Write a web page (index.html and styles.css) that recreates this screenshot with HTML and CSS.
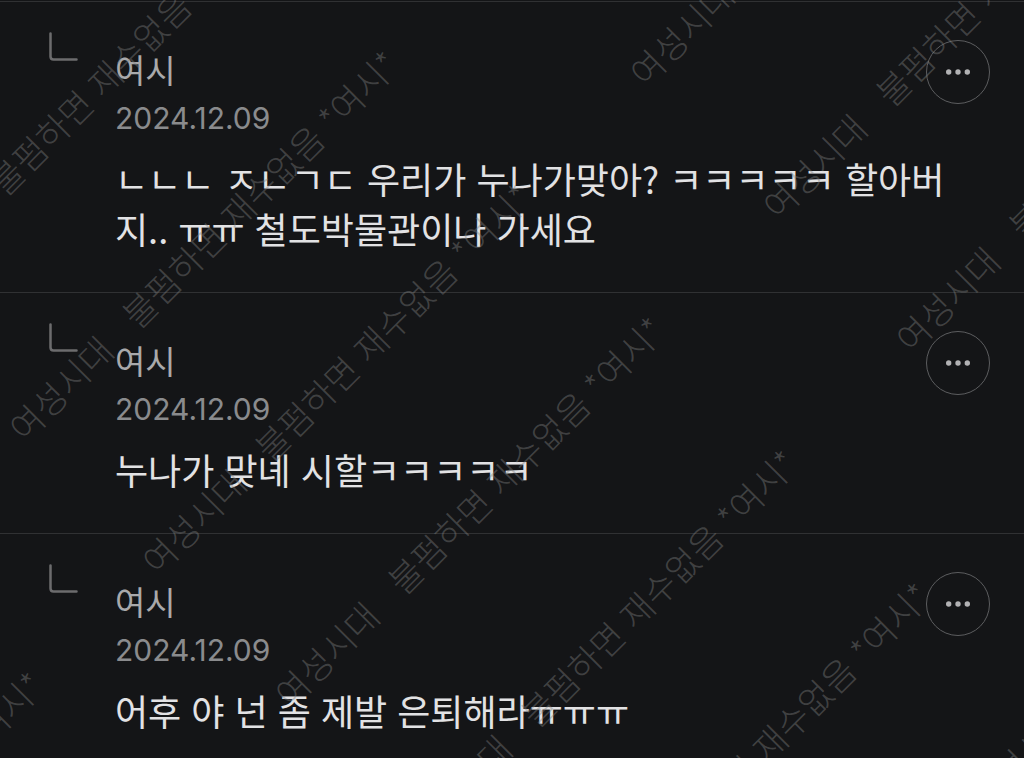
FILE: index.html
```html
<!DOCTYPE html>
<html lang="ko">
<head>
  <meta charset="UTF-8" />
  <meta name="viewport" content="width=device-width, initial-scale=1.0" />
  <title>댓글</title>
  <link rel="stylesheet" href="styles.css">
</head>
<body>
<main class="comments">
  <ul class="list">
    <li class="item">
      <svg class="reply" viewBox="0 0 30 30" aria-hidden="true"><path d="M2.5 1.5V24.500Q2.500 27.500 5.500 27.500H28.500" /></svg>
      <div class="content">
        <div class="name">여시</div>
        <div class="date">2024.12.09</div>
        <p class="text">ㄴㄴㄴ ㅈㄴㄱㄷ 우리가 누나가맞아? ㅋㅋㅋㅋㅋ 할아버지.. ㅠㅠ 철도박물관이나 가세요</p>
      </div>
      <button class="more" type="button" aria-label="더보기">
        <svg viewBox="0 0 26 6" aria-hidden="true"><circle cx="3.700" cy="3" r="2.700" /><circle cx="13" cy="3" r="2.700" /><circle cx="22.300" cy="3" r="2.700" /></svg>
      </button>
    </li>
    <li class="item">
      <svg class="reply" viewBox="0 0 30 30" aria-hidden="true"><path d="M2.5 1.5V24.500Q2.500 27.500 5.500 27.500H28.500" /></svg>
      <div class="content">
        <div class="name">여시</div>
        <div class="date">2024.12.09</div>
        <p class="text">누나가 맞녜 시할ㅋㅋㅋㅋㅋ</p>
      </div>
      <button class="more" type="button" aria-label="더보기">
        <svg viewBox="0 0 26 6" aria-hidden="true"><circle cx="3.700" cy="3" r="2.700" /><circle cx="13" cy="3" r="2.700" /><circle cx="22.300" cy="3" r="2.700" /></svg>
      </button>
    </li>
    <li class="item">
      <svg class="reply" viewBox="0 0 30 30" aria-hidden="true"><path d="M2.5 1.5V24.500Q2.500 27.500 5.500 27.500H28.500" /></svg>
      <div class="content">
        <div class="name">여시</div>
        <div class="date">2024.12.09</div>
        <p class="text">어후 야 넌 좀 제발 은퇴해라ㅠㅠㅠ</p>
      </div>
      <button class="more" type="button" aria-label="더보기">
        <svg viewBox="0 0 26 6" aria-hidden="true"><circle cx="3.700" cy="3" r="2.700" /><circle cx="13" cy="3" r="2.700" /><circle cx="22.300" cy="3" r="2.700" /></svg>
      </button>
    </li>
  </ul>
  <svg class="watermark" aria-hidden="true">
    <defs>
      <text id="mark"><tspan x="0">여성시대</tspan><tspan x="160">불펌하면 재수없음 *여시*</tspan></text>
    </defs>
    <!-- one row per diagonal, 188 apart, repeated every 690 -->
    <g transform="translate(25 444) rotate(-45)">
      <use href="#mark" x="0" y="-188" />
      <use href="#mark" x="0" y="0" />
      <use href="#mark" x="-690" y="188" />
      <use href="#mark" x="0" y="188" />
      <use href="#mark" x="690" y="188" />
      <use href="#mark" x="0" y="376" />
      <use href="#mark" x="690" y="376" />
      <use href="#mark" x="0" y="564" />
      <use href="#mark" x="690" y="564" />
      <use href="#mark" x="0" y="752" />
      <use href="#mark" x="0" y="940" />
    </g>
  </svg>
</main>
</body>
</html>
```
FILE: styles.css
```css
* {
  padding: 0;
  margin: 0;
  box-sizing: border-box;
}
body {
  background: #141517;
  font-family: "Noto Sans CJK KR", sans-serif;
}
.comments {
  position: relative;
  min-height: 100vh;
  padding-top: 1px;
  overflow: hidden;
}
.list {
  list-style: none;
}
.item {
  display: flex;
  align-items: flex-start;
  padding: 0 34px 0 48px;
  border-top: 1px solid #303133;
}
.reply {
  flex: none;
  width: 30px;
  height: 30px;
  margin-top: 30px;
  fill: none;
  stroke: #6c6c6e;
  stroke-width: 2.5;
  stroke-linecap: round;
}
.content {
  flex: 1;
  min-width: 0;
  padding: 43px 0 39px;
  margin-left: 37px;
}
.name {
  color: #a9a9ab;
  font-size: 33px;
  line-height: 48px;
}
.date {
  color: #8a8b8d;
  font-family: Inter, sans-serif;
  font-size: 30px;
  line-height: 50px;
}
.text {
  margin: 10px -30px 0 0;
  color: #e2e2e4;
  font-size: 36px;
  line-height: 50px;
}
.more {
  display: flex;
  flex: none;
  align-items: center;
  justify-content: center;
  width: 64px;
  height: 64px;
  margin-top: 38px;
  background: none;
  border: 1px solid #5c5d5f;
  border-radius: 50%;
}
.more svg {
  width: 26px;
  height: 6px;
  fill: #b2b2b4;
}
.watermark {
  position: absolute;
  top: 0;
  left: 0;
  width: 100%;
  height: 100%;
  pointer-events: none;
  fill: rgba(128, 128, 128, 0.42);
  font-size: 35px;
  font-weight: 300;
}
```
